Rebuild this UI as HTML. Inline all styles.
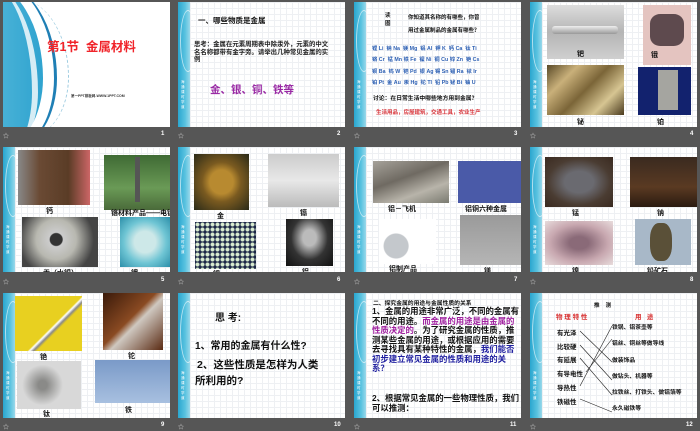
<!DOCTYPE html>
<html><head><meta charset="utf-8"><style>
*{margin:0;padding:0;box-sizing:border-box}
body{width:700px;height:431px;background:#565656;position:relative;overflow:hidden;font-family:"Liberation Sans","Noto Sans CJK SC",sans-serif}
.s{position:absolute;width:167px;height:125px;background:#fff;overflow:hidden;
background-image:linear-gradient(#eef0f3 1px,transparent 1px),linear-gradient(90deg,#eef0f3 1px,transparent 1px);background-size:6px 6px}
.st{position:absolute;left:0;top:0;width:12px;height:125px;background:linear-gradient(90deg,#2aa6cf,#5ac3e0 60%,#9ad8ea)}
.st:before{content:"";position:absolute;left:2px;top:8px;width:14px;height:60px;border:1px solid rgba(255,255,255,.6);border-radius:50%}
.st i{position:absolute;left:3px;top:78px;width:4px;font-size:3.5px;line-height:5px;color:#fff;font-style:normal}
.i{position:absolute}
.l{position:absolute;font-size:7px;font-weight:bold;color:#111;white-space:nowrap}
.f{position:absolute;font-size:6px;color:#ddd}
.n{position:absolute;font-size:6px;color:#fff;font-weight:bold}
.t{position:absolute;white-space:nowrap;font-weight:bold}
</style></head><body>

<!-- slide 1 -->
<div class="s" style="left:3px;top:2px;background:#fff">
<div class="i" style="left:-60px;top:-20px;width:100px;height:165px;border-radius:0 70% 50% 0;background:linear-gradient(90deg,#6cc6e2,#2fa3cf)"></div>
<div class="i" style="left:-45px;top:-20px;width:80px;height:165px;border-right:6px solid #fff;border-radius:0 80% 40% 0;opacity:.8"></div>
<div class="i" style="left:-50px;top:-20px;width:104px;height:165px;border-right:3px solid #1f7fb5;border-radius:0 70% 50% 0"></div>
<div class="i" style="left:-30px;top:-5px;width:96px;height:140px;border-right:1px dashed #9ccbe0;border-radius:0 80% 60% 0"></div>
<div class="t" style="left:44px;top:34px;font-size:12.5px;color:#f0242a">第1节&nbsp; 金属材料</div>
<div class="t" style="left:68px;top:92px;font-size:3.5px;color:#333">第一PPT模板网-WWW.1PPT.COM</div>
</div>

<!-- slide 2 -->
<div class="s" style="left:178px;top:2px"><div class="st"><i>海通课时学道</i></div>
<div class="t" style="left:20px;top:13px;font-size:7.5px;color:#111">一、哪些物质是金属</div>
<div class="t" style="left:16px;top:39px;font-size:6.4px;line-height:7.6px;color:#222;white-space:normal;width:138px">思考：金属在元素周期表中除汞外，元素的中文名名称都带有金字旁。请举出几种常见金属的实例</div>
<div class="t" style="left:32px;top:80px;font-size:10.5px;color:#9a2aa5">金、银、铜、铁等</div>
</div>

<!-- slide 3 -->
<div class="s" style="left:354px;top:2px"><div class="st"><i>海通课时学道</i></div>
<div class="t" style="left:31px;top:10px;font-size:5.5px;line-height:8px;color:#111">读<br>图</div>
<div class="t" style="left:54px;top:10px;font-size:5.5px;line-height:13px;color:#111">你知道其名称的有哪些，你曾<br>用过金属制品的金属有哪些？</div>
<div class="t" style="left:18px;top:42px;font-size:5.3px;line-height:11.3px;color:#2c5fb3">锂 Li&nbsp; 钠 Na&nbsp; 镁 Mg&nbsp; 铝 Al&nbsp; 钾 K&nbsp; 钙 Ca&nbsp; 钛 Ti<br>铬 Cr&nbsp; 锰 Mn 铁 Fe&nbsp; 镍 Ni&nbsp; 铜 Cu 锌 Zn&nbsp; 铯 Cs<br>钡 Ba&nbsp; 钨 W&nbsp; 钯 Pd&nbsp; 银 Ag 锡 Sn 镭 Ra&nbsp; 铱 Ir<br>铂 Pt&nbsp; 金 Au&nbsp; 汞 Hg&nbsp; 铊 Tl&nbsp; 铅 Pb 铋 Bi&nbsp; 铀 U</div>
<div class="t" style="left:19px;top:91px;font-size:5.8px;color:#111">讨论：在日常生活中哪些地方用到金属？</div>
<div class="t" style="left:22px;top:106px;font-size:5.5px;color:#d8343a">生活用品，房屋建筑，交通工具，农业生产</div>
</div>

<!-- slide 4 -->
<div class="s" style="left:530px;top:2px"><div class="st"><i>海通课时学道</i></div>
<div class="i" style="left:17px;top:3px;width:77px;height:54px;background:linear-gradient(#ddd,#b5b5b5 50%,#cfcfcf)"></div>
<div class="i" style="left:22px;top:24px;width:66px;height:8px;background:linear-gradient(#eee,#999);border-radius:3px"></div>
<div class="l" style="left:47px;top:47px">钯</div>
<div class="i" style="left:113px;top:3px;width:48px;height:60px;background:#e4c4c0"></div>
<div class="i" style="left:120px;top:12px;width:34px;height:32px;background:#5e4a4e;border-radius:30%"></div>
<div class="l" style="left:121px;top:48px">锇</div>
<div class="i" style="left:17px;top:63px;width:77px;height:50px;background:linear-gradient(135deg,#5a4a28,#c9b07a,#7b6538,#d6c592,#4a3a1e)"></div>
<div class="l" style="left:47px;top:115px">铋</div>
<div class="i" style="left:108px;top:65px;width:53px;height:48px;background:#12226e"></div>
<div class="i" style="left:128px;top:68px;width:20px;height:40px;background:#a5a5a0"></div>
<div class="l" style="left:127px;top:115px">铂</div>
</div>

<!-- slide 5 -->
<div class="s" style="left:3px;top:147px"><div class="st"><i>海通课时学道</i></div>
<div class="i" style="left:15px;top:3px;width:72px;height:55px;background:linear-gradient(90deg,#888,#6a4a34 30%,#5a3c26 70%,#c66)"></div>
<div class="l" style="left:43px;top:59px">钙</div>
<div class="i" style="left:101px;top:8px;width:66px;height:55px;background:linear-gradient(#3f6a34,#6a9a56 60%,#4a6a3a)"></div>
<div class="i" style="left:132px;top:10px;width:5px;height:45px;background:#555"></div>
<div class="l" style="left:108px;top:61px">铬材料产品——电镀</div>
<div class="i" style="left:19px;top:70px;width:76px;height:50px;background:radial-gradient(circle at 45% 45%,#333 12%,#ccc 14%,#b8b8b0 40%,#444 75%)"></div>
<div class="l" style="left:40px;top:121px">汞（水银）</div>
<div class="i" style="left:117px;top:70px;width:50px;height:50px;background:radial-gradient(circle,#cde8e8 30%,#6fc5d4 60%,#2c8fa9)"></div>
<div class="l" style="left:128px;top:121px">钾</div>
</div>

<!-- slide 6 -->
<div class="s" style="left:178px;top:147px"><div class="st"><i>海通课时学道</i></div>
<div class="i" style="left:16px;top:7px;width:55px;height:56px;background:radial-gradient(ellipse,#b88a30 30%,#7a5a20 50%,#2a2a18)"></div>
<div class="l" style="left:39px;top:64px">金</div>
<div class="i" style="left:90px;top:7px;width:71px;height:53px;background:linear-gradient(#ccc,#e8e8e8,#bbb)"></div>
<div class="l" style="left:122px;top:61px">镉</div>
<div class="i" style="left:17px;top:75px;width:61px;height:47px;background:radial-gradient(circle,#d9ecd0 1.5px,#1a2545 2.5px);background-size:5px 5px"></div>
<div class="l" style="left:35px;top:122px">锂</div>
<div class="i" style="left:108px;top:72px;width:47px;height:47px;background:radial-gradient(ellipse at 50% 40%,#bbb 20%,#333 55%,#111)"></div>
<div class="l" style="left:124px;top:120px">铝</div>
</div>

<!-- slide 7 -->
<div class="s" style="left:354px;top:147px"><div class="st"><i>海通课时学道</i></div>
<div class="i" style="left:19px;top:14px;width:76px;height:42px;background:linear-gradient(160deg,#a6a29a,#6f6a62 40%,#b8b4aa 70%,#7a7a70)"></div>
<div class="l" style="left:34px;top:57px">铝－飞机</div>
<div class="i" style="left:104px;top:14px;width:67px;height:42px;background:#4a5aa8"></div>
<div class="l" style="left:111px;top:57px">铝铜六种金属</div>
<div class="i" style="left:25px;top:72px;width:57px;height:45px;background:radial-gradient(circle at 30% 60%,#c4c8cc 25%,#fff 27%),radial-gradient(circle at 70% 50%,#aab0b5 25%,#f4f4f4 50%)"></div>
<div class="l" style="left:35px;top:117px">铝制产品</div>
<div class="i" style="left:106px;top:68px;width:65px;height:50px;background:linear-gradient(#9a9a9a,#b5b5b5)"></div>
<div class="l" style="left:130px;top:119px">镁</div>
</div>

<!-- slide 8 -->
<div class="s" style="left:530px;top:147px"><div class="st"><i>海通课时学道</i></div>
<div class="i" style="left:15px;top:10px;width:68px;height:50px;background:radial-gradient(ellipse,#6a6a70 30%,#4a3c32 65%,#3a2a20)"></div>
<div class="l" style="left:42px;top:61px">锰</div>
<div class="i" style="left:100px;top:10px;width:67px;height:50px;background:linear-gradient(#3a2a20,#5a3a22 60%,#2a1a10)"></div>
<div class="l" style="left:127px;top:61px">钠</div>
<div class="i" style="left:15px;top:74px;width:68px;height:44px;background:radial-gradient(ellipse,#8a6a78 20%,#c8a8b0 60%,#e8dcdc)"></div>
<div class="l" style="left:42px;top:119px">镍</div>
<div class="i" style="left:105px;top:72px;width:56px;height:46px;background:#a8b8c8"></div>
<div class="i" style="left:120px;top:76px;width:22px;height:38px;background:#5a5038;border-radius:40%"></div>
<div class="l" style="left:117px;top:119px">铅矿石</div>
</div>

<!-- slide 9 -->
<div class="s" style="left:3px;top:293px"><div class="st"><i>海通课时学道</i></div>
<div class="i" style="left:12px;top:3px;width:67px;height:55px;background:linear-gradient(135deg,#e8d020 55%,#fff 57%,#888 60%,#e8d020 63%)"></div>
<div class="l" style="left:37px;top:59px">铯</div>
<div class="i" style="left:100px;top:0px;width:60px;height:57px;background:linear-gradient(135deg,#3a1a0a,#8a4a22 45%,#cfc8c0 55%,#5a2a12)"></div>
<div class="l" style="left:125px;top:58px">铊</div>
<div class="i" style="left:14px;top:68px;width:64px;height:48px;background:radial-gradient(circle at 40% 50%,#8a8a88 10%,#d8d8d8 45%)"></div>
<div class="l" style="left:40px;top:116px">钛</div>
<div class="i" style="left:92px;top:67px;width:78px;height:43px;background:linear-gradient(#7a9ac8,#a8c0e0)"></div>
<div class="l" style="left:122px;top:112px">铁</div>
</div>

<!-- slide 10 -->
<div class="s" style="left:178px;top:293px"><div class="st"><i>海通课时学道</i></div>
<div class="t" style="left:37px;top:16px;font-size:10px;color:#111">思 考:</div>
<div class="t" style="left:17px;top:44px;font-size:10px;color:#111">1、常用的金属有什么性?</div>
<div class="t" style="left:19px;top:64px;font-size:10.5px;line-height:16px;color:#111">2、这些性质是怎样为人类<br><span style="margin-left:-2px">所利用的?</span></div>
</div>

<!-- slide 11 -->
<div class="s" style="left:354px;top:293px"><div class="st"><i>海通课时学道</i></div>
<div class="t" style="left:19px;top:5px;font-size:5.8px;color:#111">二、探究金属的用途与金属性质的关系</div>
<div class="t" style="left:18px;top:14px;font-size:8.4px;line-height:9.5px;color:#111;white-space:normal;width:149px">1、金属的用途非常广泛，不同的金属有不同的用途。<span style="color:#a020a0">而金属的用途是由金属的性质决定的</span>。为了研究金属的性质，推测某些金属的用途，或根据应用的需要去寻找具有某种特性的金属，<span style="color:#2020a0">我们能否初步建立常见金属的性质和用途的关系？</span></div>
<div class="t" style="left:18px;top:100px;font-size:8.4px;line-height:10px;color:#111;white-space:normal;width:149px">2、根据常见金属的一些物理性质，我们可以推测：</div>
</div>

<!-- slide 12 -->
<div class="s" style="left:530px;top:293px"><div class="st"><i>海通课时学道</i></div>
<div class="t" style="left:64px;top:8px;font-size:5.5px;color:#111">推&nbsp;&nbsp;&nbsp; 测</div>
<div class="t" style="left:26px;top:18px;font-size:6.5px;color:#d83030">物 理 特 性</div>
<div class="t" style="left:105px;top:18px;font-size:6.5px;color:#d83030">用&nbsp;&nbsp; 途</div>
<div class="t" style="left:27px;top:34px;font-size:6.5px;line-height:13.7px;color:#111">有光泽<br>比较硬<br>有延展<br>有导电性<br>导热性<br>铁磁性</div>
<div class="t" style="left:82px;top:27px;font-size:5.8px;line-height:16.3px;color:#111">铁锅、铝茶壶等<br>铝丝、铜丝等做导线<br>做装饰品<br>做钻头、机器等<br>拉铁丝、打铁头、做铝箔等<br>永久磁铁等</div>
<svg class="i" style="left:0;top:0" width="167" height="125"><g stroke="#222" stroke-width=".6" fill="none">
<path d="M50 38 L82 69"/><path d="M50 52 L82 87"/><path d="M50 65 L82 102"/><path d="M56 79 L82 46"/><path d="M50 93 L82 33"/><path d="M50 106 L82 119"/></g></svg>
</div>

<div class="f" style="left:3px;top:131px">☆</div><div class="n" style="left:161px;top:131px">1</div>
<div class="f" style="left:178px;top:131px">☆</div><div class="n" style="left:337px;top:131px">2</div>
<div class="f" style="left:354px;top:131px">☆</div><div class="n" style="left:514px;top:131px">3</div>
<div class="f" style="left:530px;top:131px">☆</div><div class="n" style="left:690px;top:131px">4</div>
<div class="f" style="left:3px;top:277px">☆</div><div class="n" style="left:161px;top:277px">5</div>
<div class="f" style="left:178px;top:277px">☆</div><div class="n" style="left:337px;top:277px">6</div>
<div class="f" style="left:354px;top:277px">☆</div><div class="n" style="left:514px;top:277px">7</div>
<div class="f" style="left:530px;top:277px">☆</div><div class="n" style="left:690px;top:277px">8</div>
<div class="f" style="left:3px;top:422px">☆</div><div class="n" style="left:161px;top:422px">9</div>
<div class="f" style="left:178px;top:422px">☆</div><div class="n" style="left:334px;top:422px">10</div>
<div class="f" style="left:354px;top:422px">☆</div><div class="n" style="left:510px;top:422px">11</div>
<div class="f" style="left:530px;top:422px">☆</div><div class="n" style="left:686px;top:422px">12</div>
</body></html>
